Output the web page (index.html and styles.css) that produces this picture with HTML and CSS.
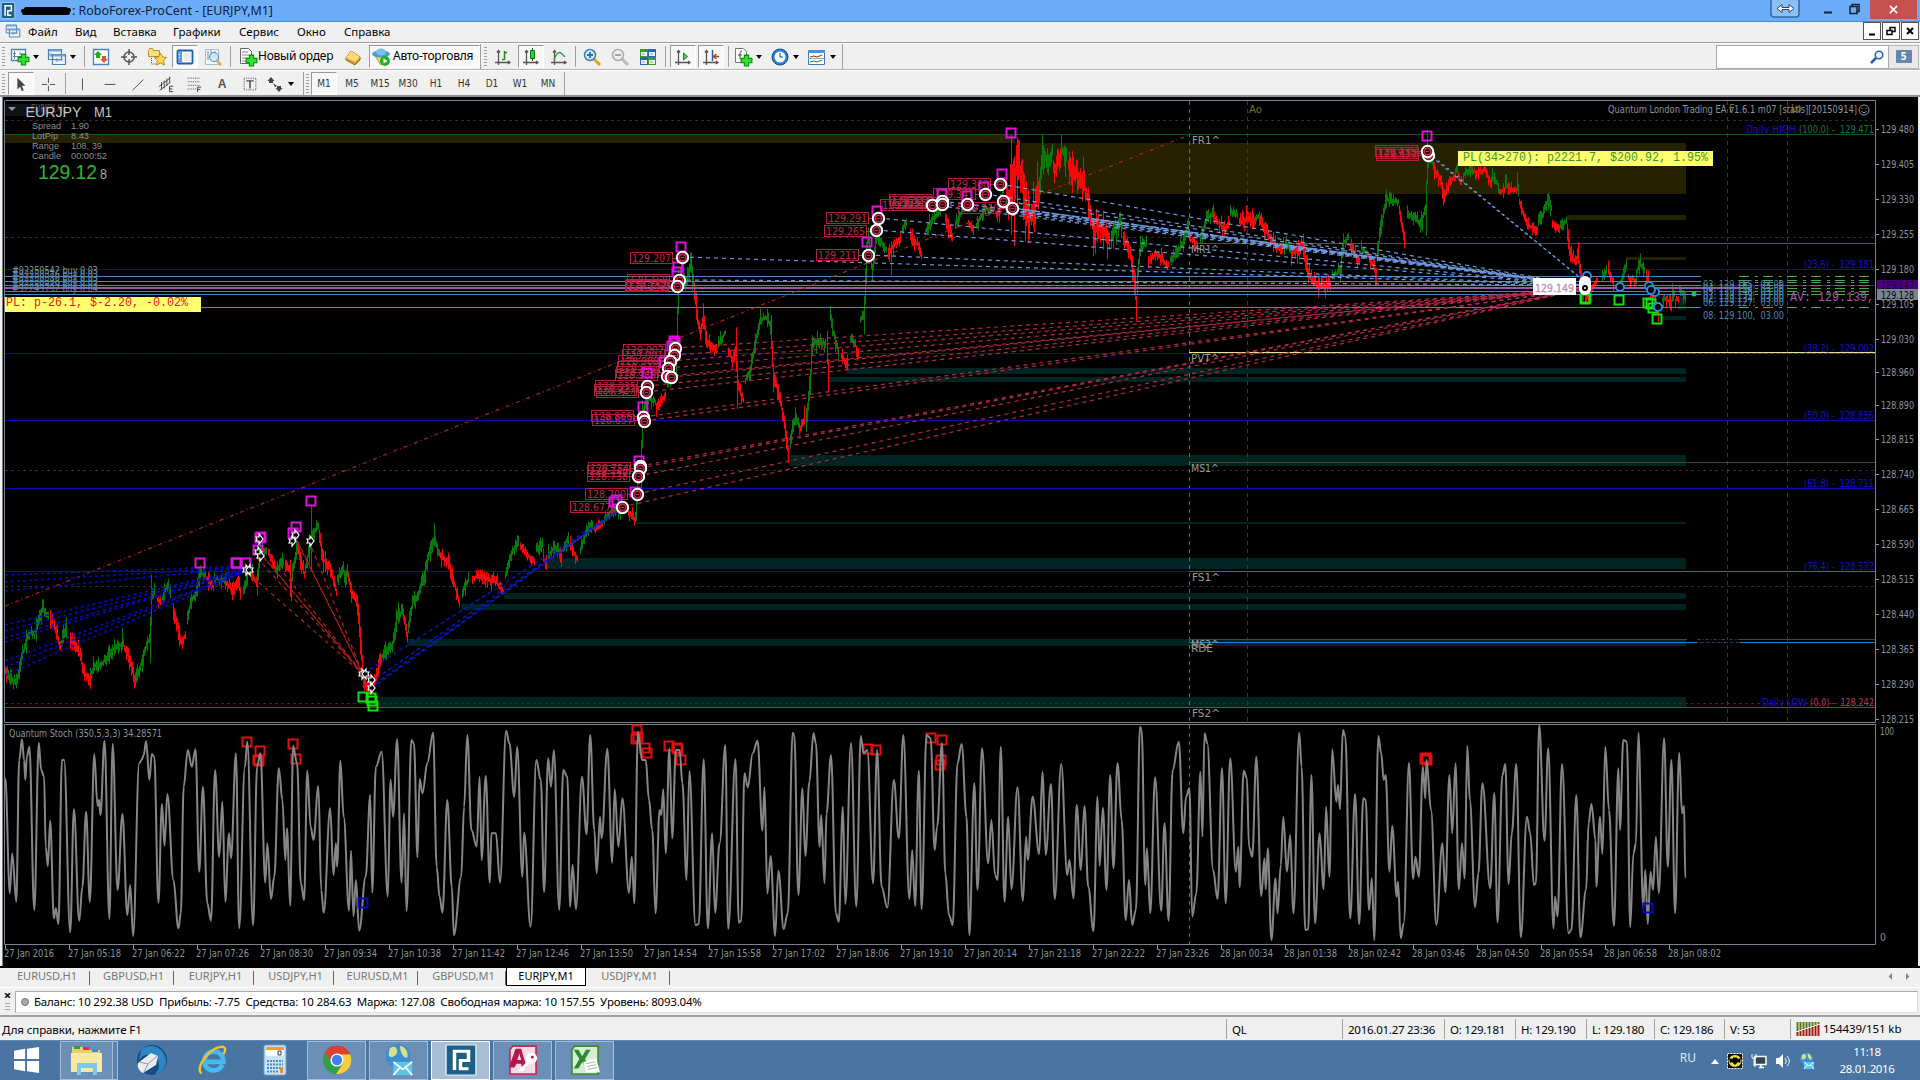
FILE: index.html
```
<!DOCTYPE html>
<html lang="ru">
<head>
  <meta charset="UTF-8">
  <title>RoboForex-ProCent - [EURJPY,M1]</title>
  <link rel="stylesheet" href="styles.css">
</head>
<body>
  <!-- icons -->
  <svg class="defs">
    <symbol id="i-plus" viewBox="0 0 12 12"><path d="M4 1h4v3h3v4H8v3H4V8H1V4h3z" fill="#2fe02f" stroke="#0a8a0a"/></symbol>
    <symbol id="i-newchart" viewBox="0 0 20 20"><path d="M1.500 2.500h14v11h-14z" fill="#fff" stroke="#4f82b4" stroke-width="1.300"/><path d="M4.500 4v8M3 9.500h10M3 6.500h3M10 5v3" stroke="#5f7f9f" fill="none"/><use href="#i-plus" x="7" y="6" width="13" height="13"/></symbol>
    <symbol id="i-profiles" viewBox="0 0 20 20"><path d="M1.500 2.500h13v10h-13zM5.500 7.500h13v10h-13z" fill="#eaf4ff" stroke="#4f82b4" stroke-width="1.200"/><path d="M2 3.500h12M6 8.500h12" stroke="#6aa5e0" stroke-width="2"/><path d="M8 13h8M10 11v4M4 6v4M2 8h3" stroke="#6f8fb0"/></symbol>
    <symbol id="i-market" viewBox="0 0 20 20"><path d="M2.500 2.500h15v15h-15z" fill="#fff" stroke="#4f82c4" stroke-width="1.400"/><path d="M7 4l4 4H9v3H5V8H3z" fill="#18b018"/><path d="M13 16l-4-4h2V9h4v3h2z" fill="#d9583a"/></symbol>
    <symbol id="i-target" viewBox="0 0 20 20"><circle cx="10" cy="10" r="5" fill="none" stroke="#555" stroke-width="1.500"/><path d="M10 2v6M10 12v6M2 10h6M12 10h6" stroke="#555" stroke-width="1.500"/></symbol>
    <symbol id="i-folderstar" viewBox="0 0 20 20"><path d="M1.500 3.500l1-2h3l1 2h6v6h-11z" fill="#f7de80" stroke="#b8922c"/><path d="M4.500 11v6h5" stroke="#555" fill="none" stroke-dasharray="1 1"/><path d="M13.500 6l2 4 4 .5-3 3 1 4.500-4-2-4 2 1-4.500-3-3 4-.5z" fill="#ffd84a" stroke="#b8862c"/></symbol>
    <symbol id="i-nav" viewBox="0 0 20 20"><rect x="2.500" y="3.500" width="15" height="13" rx="1" fill="#fff" stroke="#1d5fa8" stroke-width="1.800"/><path d="M3 4h4v12H3z" fill="#5ea0e6"/><path d="M4 7.500h1M4 10.500h1" stroke="#fff"/><path d="M9 7h7M9 9h7M9 11h7M9 13h7" stroke="#d0dcec"/></symbol>
    <symbol id="i-tester" viewBox="0 0 20 20"><path d="M2.500 2.500h13v15h-13z" fill="#f3f8ff" stroke="#a8bcd0"/><path d="M5 4v9M8 3v8M12 4v7" stroke="#6b8fb8"/><circle cx="11" cy="10" r="4.500" fill="#cfe5ff" fill-opacity=".8" stroke="#5585b8"/><path d="M14 14l4 4" stroke="#e0b030" stroke-width="2.500"/></symbol>
    <symbol id="i-order" viewBox="0 0 20 20"><path d="M2.500 1.500h8l3 3v12h-11z" fill="#fff" stroke="#666"/><path d="M4 5h6M4 8h7M4 11h5M4 14h4" stroke="#888"/><use href="#i-plus" x="7" y="7" width="13" height="13"/></symbol>
    <symbol id="i-gold" viewBox="0 0 20 20"><path d="M3 11l5-7 9 6v3l-5 5-9-5z" fill="#d3962c" stroke="#9a6a12"/><path d="M3 11l5-7 9 6-5 5z" fill="#ffd978"/></symbol>
    <symbol id="i-auto" viewBox="0 0 20 20"><path d="M3 7l7 11 7-11z" fill="#f4d35a" stroke="#c09a30"/><ellipse cx="10" cy="7" rx="9" ry="3.500" fill="#4d9ad4"/><ellipse cx="10" cy="5" rx="5" ry="3.500" fill="#7fc0ea"/><circle cx="14" cy="14" r="5" fill="#22b322"/><path d="M12.500 11.500v5l4-2.500z" fill="#fff"/></symbol>
    <symbol id="i-axes" viewBox="0 0 20 20"><path d="M5.500 3v15M2 15.500h15M4 5.500l1.500-2 1.500 2M15 14l2 1.500-2 1.500" stroke="#555" fill="none" stroke-width="1.300"/></symbol>
    <symbol id="i-bars" viewBox="0 0 20 20"><use href="#i-axes"/><path d="M11.500 4v9M9 12.500h2M12 5.500h2" stroke="#169016" stroke-width="1.500"/></symbol>
    <symbol id="i-candle" viewBox="0 0 20 20"><use href="#i-axes"/><path d="M11.500 1v13" stroke="#0b700b"/><path d="M9.500 3.500h4v8h-4z" fill="#2ed02e" stroke="#0b700b"/></symbol>
    <symbol id="i-line" viewBox="0 0 20 20"><use href="#i-axes"/><path d="M5 13c2-6 5-9 7-7l4 4" fill="none" stroke="#2a9a3a" stroke-width="1.300"/></symbol>
    <symbol id="i-zoomin" viewBox="0 0 20 20"><path d="M12 12l6 6" stroke="#d9a520" stroke-width="3"/><circle cx="8" cy="8" r="5.500" fill="#d8ecff" stroke="#3a7cc0" stroke-width="1.500"/><path d="M5 8h6M8 5v6" stroke="#2a6cb0" stroke-width="1.800"/></symbol>
    <symbol id="i-zoomout" viewBox="0 0 20 20"><path d="M12 12l6 6" stroke="#bbb" stroke-width="3"/><circle cx="8" cy="8" r="5.500" fill="#eee" stroke="#aaa" stroke-width="1.500"/><path d="M5 8h6" stroke="#999" stroke-width="1.800"/></symbol>
    <symbol id="i-tile" viewBox="0 0 20 20"><path d="M2 2h8v8H2zM10 10h8v8h-8z" fill="#3d9a28"/><path d="M10 2h8v8h-8zM2 10h8v8H2z" fill="#2c64b8"/><path d="M3 5h6v4H3zM11 5h6v4h-6zM3 13h6v4H3zM11 13h6v4h-6z" fill="#eef6ee"/><path d="M4 7h3M12 7h3M4 15h3M12 15h3" stroke="#7a9ac0"/></symbol>
    <symbol id="i-scroll" viewBox="0 0 20 20"><use href="#i-axes"/><path d="M10.500 6v7l4-3.500z" fill="#4fd04f" stroke="#148a14"/></symbol>
    <symbol id="i-shift" viewBox="0 0 20 20"><use href="#i-axes"/><path d="M11.500 3v11" stroke="#2060b0" stroke-width="1.500"/><path d="M18 9.500h-5M15.500 7l-3 2.500 3 2.500" stroke="#c23a12" stroke-width="1.500" fill="none"/></symbol>
    <symbol id="i-indic" viewBox="0 0 20 20"><path d="M2.500 1.500h8l3 3v11h-11z" fill="#fff" stroke="#777"/><path d="M9 4c-2 0-2 2-2 4v4M5 8h4" stroke="#444" fill="none"/><use href="#i-plus" x="7" y="7" width="13" height="13"/></symbol>
    <symbol id="i-clock" viewBox="0 0 20 20"><circle cx="10" cy="10" r="8" fill="#2f7fd4" stroke="#0d4a90"/><circle cx="10" cy="10" r="5.500" fill="#f2f8ff"/><path d="M10 6v4h3" stroke="#345" fill="none"/></symbol>
    <symbol id="i-templ" viewBox="0 0 20 20"><path d="M1.500 3.500h16v14h-16z" fill="#fff" stroke="#3c78b8"/><path d="M1 4.500h17" stroke="#4a90e0" stroke-width="3"/><path d="M3 10l4-1 3 1 5-2" stroke="#8a2a20" fill="none"/><path d="M3 15l4-1 3 1 5-2" stroke="#1f8a2a" fill="none"/><path d="M1 11.500h16" stroke="#8ab"/></symbol>
    <symbol id="i-cursor" viewBox="0 0 20 20"><path d="M6 3v13l3-3 2 5 2-1-2-5h4z" fill="#444"/></symbol>
    <symbol id="i-cross" viewBox="0 0 20 20"><path d="M10.500 3v6M10.500 12v6M3 10.500h6M12 10.500h6" stroke="#444"/></symbol>
    <symbol id="i-vline" viewBox="0 0 20 20"><path d="M10.500 4v13" stroke="#444"/></symbol>
    <symbol id="i-hline" viewBox="0 0 20 20"><path d="M4 10.500h12" stroke="#444"/></symbol>
    <symbol id="i-trend" viewBox="0 0 20 20"><path d="M4 17L16 5" stroke="#444"/></symbol>
    <symbol id="i-chan" viewBox="0 0 20 20"><path d="M2 13L15 3M3 17L15 8M5 8v8M8 6v9M11 4v8M14 2v7" stroke="#444"/><path d="M18 12.500h-4v6h4M14 15.500h3" stroke="#333" fill="none"/></symbol>
    <symbol id="i-fib" viewBox="0 0 20 20"><path d="M3 3.500h14M3 7.500h14M3 11.500h14M3 15.500h9" stroke="#444" stroke-dasharray="1 1"/><path d="M18 13.500h-4V19M14 16h3" stroke="#333" fill="none"/></symbol>
    <symbol id="i-label" viewBox="0 0 20 20"><path d="M3.500 3.500h13v13h-13z" fill="none" stroke="#444" stroke-dasharray="1 1"/><path d="M6 6.500h8M10 6v9" stroke="#444" stroke-width="1.600"/></symbol>
    <symbol id="i-arrows" viewBox="0 0 20 20"><path d="M6 3l3.500 4H8v2H4V7H2.500zM8 9l4 3-2 1zM14 18l-3.500-4H12v-2h4v2h1.500z" fill="#444"/></symbol>
    <symbol id="i-robo" viewBox="0 0 32 38"><rect x="1" y="1" width="30" height="36" rx="1" fill="#1d5f86" stroke="#d9ebf5" stroke-width="1.500"/><path d="M9.500 31V8.500h14v11h-8v10h8" fill="none" stroke="#fff" stroke-width="3.500"/></symbol>
    <symbol id="i-globe" viewBox="0 0 30 36"><circle cx="14" cy="14" r="13" fill="#3c8fd0"/><path d="M5 6c5-5 9 0 8 4s-7 7-9 3zM16 3c6 1 9 7 8 12-4 2-8-5-8-12z" fill="#d8e08a"/><path d="M9 20h20v14H9z" fill="#5cc6e8"/><path d="M9 20l10 8 10-8M9 34l7-8M29 34l-7-8" stroke="#fff" stroke-width="1.800" fill="none"/></symbol>
  </svg>

  <div class="titlebar">
    <svg class="app-icon" preserveAspectRatio="none"><use href="#i-robo"/></svg>
    <svg class="scribble" viewBox="0 0 52 10"><path d="M3 5l46-1M4 7h44M6 3h40" stroke="#000" stroke-width="4" stroke-linecap="round"/></svg>
    <span>: RoboForex-ProCent - [EURJPY,M1]</span>
    <div class="win-buttons">
      <svg class="sizer" viewBox="0 0 30 18"><path d="M1 0v14q0 3 3 3h22q3 0 3-3V0" fill="#8cc0fa" stroke="#33699f" stroke-width="1.500"/><path d="M7 8.500l5-4v3h7v-3l5 4-5 4v-3h-7v3z" fill="#fff" stroke="#345"/></svg>
      <svg class="minmax" viewBox="0 0 60 19"><path d="M20 12.500h8" stroke="#123" stroke-width="2"/><path d="M46 6.500h7v7h-7zM48 6V4.500h7v7h-2" fill="none" stroke="#123" stroke-width="1.500"/></svg>
      <div class="close"><svg viewBox="0 0 10 10" width="9" height="9"><path d="M1 1l8 8M9 1l-8 8" stroke="#fff" stroke-width="1.800"/></svg></div>
    </div>
  </div>

  <div class="menubar">
    <svg class="menu-icon"><use href="#i-profiles"/></svg>
    <span class="m1">Файл</span><span class="m2">Вид</span><span class="m3">Вставка</span><span class="m4">Графики</span><span class="m5">Сервис</span><span class="m6">Окно</span><span class="m7">Справка</span>
    <div class="mdi">
      <div><svg viewBox="0 0 12 12"><path d="M3 9.500h6" stroke="#000" stroke-width="2"/></svg></div>
      <div><svg viewBox="0 0 12 12"><path d="M2 5.500h5v4H2zM5 5V2.500h5v4H7" fill="none" stroke="#000" stroke-width="1.500"/></svg></div>
      <div><svg viewBox="0 0 12 12"><path d="M3 3l6 6M9 3l-6 6" stroke="#000" stroke-width="2"/></svg></div>
    </div>
  </div>

  <div class="toolrow first">
    <div class="grip"></div>
    <div class="dd"><svg><use href="#i-newchart"/></svg><i></i></div>
    <div class="dd"><svg><use href="#i-profiles"/></svg><i></i></div>
    <div class="sep s5"></div>
    <div class="tool"><svg><use href="#i-market"/></svg></div>
    <div class="tool"><svg><use href="#i-target"/></svg></div>
    <div class="tool"><svg><use href="#i-folderstar"/></svg></div>
    <div class="tool on"><svg><use href="#i-nav"/></svg></div>
    <div class="tool"><svg><use href="#i-tester"/></svg></div>
    <div class="sep s6"></div>
    <div class="order"><svg><use href="#i-order"/></svg><span>Новый ордер</span></div>
    <div class="tool"><svg><use href="#i-gold"/></svg></div>
    <div class="auto"><svg><use href="#i-auto"/></svg><span>Авто-торговля</span></div>
    <div class="edge"></div>
    <div class="grip g1"></div>
    <div class="tool"><svg><use href="#i-bars"/></svg></div>
    <div class="tool on"><svg><use href="#i-candle"/></svg></div>
    <div class="tool"><svg><use href="#i-line"/></svg></div>
    <div class="sep s5"></div>
    <div class="tool"><svg><use href="#i-zoomin"/></svg></div>
    <div class="tool"><svg><use href="#i-zoomout"/></svg></div>
    <div class="tool"><svg><use href="#i-tile"/></svg></div>
    <div class="sep s7"></div>
    <div class="tool on"><svg><use href="#i-scroll"/></svg></div>
    <div class="tool on"><svg><use href="#i-shift"/></svg></div>
    <div class="sep s6"></div>
    <div class="dd"><svg><use href="#i-indic"/></svg><i></i></div>
    <div class="dd"><svg><use href="#i-clock"/></svg><i></i></div>
    <div class="dd"><svg><use href="#i-templ"/></svg><i></i></div>
    <div class="edge"></div>
    <div class="search">
      <div class="field"><svg viewBox="0 0 14 14"><circle cx="9" cy="5" r="3.800" fill="#eaf3ff" stroke="#2a5cb0" stroke-width="1.500"/><path d="M6 8l-5 5" stroke="#2a5cb0" stroke-width="2.500"/></svg></div>
      <div class="chat"><b>5</b></div>
    </div>
  </div>

  <div class="toolrow second">
    <div class="grip"></div>
    <div class="tool on first-tool"><svg><use href="#i-cursor"/></svg></div>
    <div class="tool"><svg><use href="#i-cross"/></svg></div>
    <div class="sep s6"></div>
    <div class="tool"><svg><use href="#i-vline"/></svg></div>
    <div class="tool"><svg><use href="#i-hline"/></svg></div>
    <div class="tool"><svg><use href="#i-trend"/></svg></div>
    <div class="tool"><svg><use href="#i-chan"/></svg></div>
    <div class="tool"><svg><use href="#i-fib"/></svg></div>
    <div class="tool letter">A</div>
    <div class="tool"><svg><use href="#i-label"/></svg></div>
    <div class="dd"><svg><use href="#i-arrows"/></svg><i></i></div>
    <div class="edge"></div>
    <div class="grip g2"></div>
    <div class="tool tf on">M1</div><div class="tool tf">M5</div><div class="tool tf">M15</div><div class="tool tf">M30</div><div class="tool tf">H1</div><div class="tool tf">H4</div><div class="tool tf">D1</div><div class="tool tf">W1</div><div class="tool tf">MN</div>
    <div class="edge"></div>
  </div>

  <div class="chart-window"><svg id="chart" width="1920" height="869" viewBox="0 97 1920 869"></svg></div>

  <div class="tabs">
    <div class="w89">EURUSD,H1</div><div class="w84">GBPUSD,H1</div><div class="w80">EURJPY,H1</div><div class="w80">USDJPY,H1</div><div class="w84">EURUSD,M1</div><div class="w88">GBPUSD,M1</div><div class="w80 active">EURJPY,M1</div><div class="w84">USDJPY,M1</div>
    <svg class="tab-arrows" viewBox="0 0 24 8"><path d="M4 0v8L0 4zM20 0v8l4-4z" fill="#888"/></svg>
  </div>

  <div class="terminal">
    <div class="tside"><b>×</b><i></i></div>
    <div class="balance"><span class="dot"></span><span class="bal-text">Баланс: 10 292.38 USD&nbsp; Прибыль: -7.75&nbsp; Средства: 10 284.63&nbsp; Маржа: 127.08&nbsp; Свободная маржа: 10 157.55&nbsp; Уровень: 8093.04%</span></div>
  </div>

  <div class="status">
    <span class="help">Для справки, нажмите F1</span>
    <div class="f116">QL</div><div class="f102">2016.01.27 23:36</div><div class="f71">O: 129.181</div><div class="f71">H: 129.190</div><div class="f68">L: 129.180</div><div class="f70">C: 129.186</div><div class="f66">V: 53</div>
    <div class="net"><svg viewBox="0 0 24 14" width="24" height="14"><path d="M1.500 0v9M4.500 0v8M7.500 0v7M10.500 0v6M13.500 0v5M16.500 0v4M19.500 0v3M22.500 0v2" stroke="#5a7a18" stroke-width="2"/><path d="M1.500 14v-4M4.500 14v-5M7.500 14v-6M10.500 14v-7M13.500 14v-8M16.500 14v-9M19.500 14v-10M22.500 14v-11" stroke="#a01c10" stroke-width="2"/></svg><span>154439/151 kb</span></div>
  </div>

  <div class="taskbar">
    <div class="start"><svg viewBox="0 0 28 28" width="28" height="26"><path d="M0 4l12-2v11H0zM14 2l13-2v13H14zM0 15h12v11L0 24zM14 15h13v13l-13-2z" fill="#fff"/></svg></div>
    <div class="task open stack"><svg viewBox="0 0 34 32" width="34" height="32"><path d="M2 3h12l2 3h14v22H2z" fill="#e8cf74"/><path d="M4 2h6v3H4z" fill="#2f9e3a"/><path d="M13 3h6v3h-6z" fill="#d33"/><path d="M22 5h6v3h-6z" fill="#3a8fd4"/><path d="M1 9h31v19H1z" fill="#fae9a2"/><path d="M7 31V19h20v12h-4v-7H11v7z" fill="#7cc8ee"/></svg></div>
    <div class="task"><svg viewBox="0 0 32 32" width="32" height="32"><circle cx="17" cy="16" r="15" fill="#174a86"/><path d="M6 6C14-2 30 2 31 17c0 8-6 13-11 13 6-6 5-15-2-18S6 12 4 17z" fill="#3086c4"/><path d="M3 19l13-10 7 3-2 9-13 8c-4-2-6-6-5-10z" fill="#e9edf0"/><path d="M4 18l9 2 9-8M13 20l-4 8" fill="none" stroke="#8a98a8"/></svg></div>
    <div class="task"><svg viewBox="0 0 34 32" width="32" height="32"><path d="M27 21c-2 4-5 6-9 6-6 0-10-4-10-10S12 7 18 7s10 4 10 11H10" fill="none" stroke="#43baf0" stroke-width="5"/><path d="M5 30C-3 26 12 4 25 2c7-1 5 5 3 8" fill="none" stroke="#f2c22c" stroke-width="2.500"/></svg></div>
    <div class="task"><svg viewBox="0 0 24 32" width="24" height="32"><rect x="1" y="1" width="22" height="30" rx="2" fill="#c9e4f6" stroke="#6ba4cc"/><path d="M3 3h18v3H3z" fill="#f09a3c"/><path d="M3 6h18v6H3z" fill="#f5fbff"/><path d="M15 7h3v4h-3z" fill="none" stroke="#345"/><path d="M4 17h16M4 20.500h16M4 24h16M4 27.500h12" stroke="#4f8fc0" stroke-width="2" stroke-dasharray="2 1"/><path d="M17 24h3v5h-3z" fill="#f08a2c"/></svg></div>
    <div class="task open"><svg viewBox="0 0 32 32" width="30" height="32"><circle cx="16" cy="16" r="15" fill="#2f9f49"/><path d="M3 8A15 15 0 0 1 30 10H16L10 18z" fill="#dc4233"/><path d="M30 10A15 15 0 0 1 15 31l8-12-4-9z" fill="#fbcf3c"/><circle cx="16" cy="16" r="7" fill="#fff"/><circle cx="16" cy="16" r="5.500" fill="#3f7df0"/></svg></div>
    <div class="task open"><svg width="30" height="34"><use href="#i-globe"/></svg></div>
    <div class="task open current"><svg viewBox="0 0 32 38" preserveAspectRatio="none" width="32" height="32"><use href="#i-robo" width="32" height="38"/></svg></div>
    <div class="task open"><svg viewBox="0 0 32 32" width="30" height="30"><path d="M5 1h25v30H2V5z" fill="#f6dbe6" stroke="#c03060" stroke-width="2"/><path d="M1 24L8 4h6l6 20h-5l-1-4H9l-2 4zM10 16h4l-2-7z" fill="#b5174c"/><circle cx="25" cy="14" r="6" fill="#fff"/><circle cx="26" cy="13" r="1.500" fill="#b5174c"/><path d="M21 17l-11 11h6l8-9" fill="#fff"/></svg></div>
    <div class="task open"><svg viewBox="0 0 32 32" width="30" height="30"><path d="M5 1h25v30H2V5z" fill="#d8ecd4" stroke="#3f8f3c" stroke-width="2"/><path d="M4 5h5l4 7 4-7h5l-6 10 6 10h-5l-4-7-4 7H4l6-10z" fill="#2c8a34"/><path d="M14 18l14-4 4 15H17z" fill="#fff"/><path d="M17 20l10-2M18 23l10-2M19 26l10-2" stroke="#8cbf86"/></svg></div>
    <div class="tray">
      <span class="lang">RU</span>
      <svg viewBox="0 0 8 5" width="8" height="5"><path d="M0 5l4-5 4 5z" fill="#fff"/></svg>
      <svg viewBox="0 0 16 16" width="16" height="16"><path d="M.5.5h15v15H.5z" fill="#111" stroke="#fff" stroke-dasharray="2 1"/><ellipse cx="8" cy="8" rx="6.500" ry="6" fill="#f0e040"/><path d="M2 5l3 1 2-2 1 1 1-1 2 2 3-1-1 5-2-1-3 3-3-3-2 1z" fill="#000"/></svg>
      <svg viewBox="0 0 16 16" width="16" height="16"><path d="M4 3.500h11v8H4zM8 14.500h5M10 12v2" fill="#345" stroke="#fff" stroke-width="1.500"/><path d="M1 1v4h4V1M3 5v8h2" fill="none" stroke="#fff"/></svg>
      <svg viewBox="0 0 16 16" width="16" height="16"><path d="M1 5h3l4-4v14l-4-4H1z" fill="#fff"/><path d="M10 5c1.500 2 1.500 4 0 6M12 3c3 3 3 7 0 10" stroke="#fff" fill="none"/></svg>
      <svg width="16" height="18"><use href="#i-globe"/></svg>
    </div>
    <div class="clock"><span>11:18</span><span>28.01.2016</span></div>
  </div>

  <script src="chart.js"></script>
</body>
</html>
```
FILE: styles.css
```
* { box-sizing: border-box; margin: 0; padding: 0; }
body { width: 1920px; height: 1080px; overflow: hidden; display: flex; flex-direction: column; background: #f0f0f0; font-family: "Noto Sans", sans-serif; font-size: 12px; color: #000; white-space: nowrap; }
svg { display: block; flex: none; }
.defs { position: absolute; width: 0; height: 0; }

.titlebar { height: 22px; background: #6badf8; border-bottom: 1px solid #4a88cc; display: flex; align-items: center; color: #10203a; }
.app-icon { width: 16px; height: 17px; }
.scribble { width: 52px; height: 10px; margin-left: 4px; }
.titlebar span { font-size: 12.5px; width: 203px; letter-spacing: -.05px; }
.win-buttons { margin-left: auto; display: flex; align-items: flex-start; height: 22px; padding-right: 3px; }
.sizer { width: 30px; height: 18px; }
.minmax { width: 60px; height: 19px; margin: 0 6px 0 4px; }
.close { width: 47px; height: 19px; background: #c75050; display: flex; align-items: center; justify-content: center; }

.menubar { height: 21px; border-bottom: 1px solid #a0a0a0; display: flex; align-items: center; padding-bottom: 2px; }
.menu-icon { width: 16px; height: 16px; margin: 0 7px 0 5px; }
.menubar span { font-size: 11.500px; }
.m1 { width: 47px; } .m2 { width: 38px; } .m3 { width: 60px; } .m4 { width: 66px; } .m5 { width: 58px; } .m6 { width: 47px; }
.mdi { margin-left: auto; display: flex; gap: 1px; padding-right: 1px; }
.mdi div { width: 18px; height: 18px; border: 1px solid #555; background: #fdfdfd; padding: 2px; }
.mdi svg { width: 12px; height: 12px; }

.toolrow { display: flex; align-items: center; }
.toolrow svg { width: 20px; height: 20px; }
.first { height: 27px; border-top: 1px solid #fff; border-bottom: 1px solid #b4b4b4; }
.second { height: 27px; border-top: 1px solid #fff; border-bottom: 2px solid #909090; padding-top: 1px; }
.grip { width: 3px; height: 20px; margin: 0 2px 0 2px; background: repeating-linear-gradient(#a0a0a0 0 1px, #f0f0f0 1px 3px); flex: none; }
.first .grip:first-child, .second .grip:first-child { margin-right: 3px; }
.first .g1 { margin: 0 2px 0 3px; }
.tool { width: 28px; height: 23px; display: flex; align-items: center; justify-content: center; flex: none; }
.tool.on { width: 26px; margin: 0 1px; background: #f8f8f8; border: 1px solid #fff; border-top-color: #999; border-left-color: #999; }
.tool.tf { font-size: 10px; color: #333; font-family: "DejaVu Sans Condensed", "DejaVu Sans", sans-serif; }
.tool.first-tool { margin: 0; }
.second .tool svg { width: 18px; height: 18px; }
.letter { font: bold 12px "Liberation Sans", sans-serif; color: #555; }
.dd { width: 37px; height: 23px; display: flex; align-items: center; gap: 3px; padding-left: 2px; flex: none; }
.dd i { border: 3px solid transparent; border-top: 4px solid #000; border-bottom: 0; }
.sep { height: 21px; background: linear-gradient(#a0a0a0, #a0a0a0) center / 1px 100% no-repeat; flex: none; }
.s5 { width: 5px; } .s6 { width: 6px; } .s7 { width: 7px; }
.order { width: 106px; display: flex; align-items: center; padding-left: 5px; gap: 0; }
.order span, .auto span { font-size: 12px; letter-spacing: -.25px; margin-top: -2px; }
.auto { width: 111px; height: 23px; margin-left: 2px; display: flex; align-items: center; gap: 2px; padding-left: 1px; background: #f8f8f8; border: 1px solid #fff; border-top-color: #999; border-left-color: #999; }
.edge { width: 1px; align-self: stretch; background: #a0a0a0; flex: none; }
.second .edge { margin-left: 2px; }
.g2 { margin-right: 1px; }
.second .dd { padding-left: 1px; width: 37px; }
.search { margin-left: auto; display: flex; height: 24px; padding-right: 1px; }
.field { width: 173px; border: 1px solid #aaa; background: #fff; display: flex; justify-content: flex-end; align-items: center; padding-right: 4px; }
.search .field svg { width: 14px; height: 14px; }
.chat { width: 30px; border: 1px solid #b8b8b8; border-left: 0; background: #e8e8e8; display: flex; align-items: center; justify-content: center; }
.chat b { width: 16px; height: 13px; background: #6486b0; color: #fff; font-size: 10px; line-height: 13px; text-align: center; border-radius: 1px; }

.chart-window { height: 869px; flex: none; background: #000; }
#chart text { white-space: pre; }
.t { font-family: "DejaVu Sans Condensed", "DejaVu Sans", sans-serif; font-size: 10.500px; }
.a { font-family: "Liberation Sans", Arial, sans-serif; }
.m { font-family: "Liberation Mono", monospace; font-size: 12px; }

.tabs { height: 22px; border-top: 2px solid #000; display: flex; align-items: stretch; padding-left: 1px; color: #777; border-bottom: 1px solid #fff; }
.tabs div { text-align: center; line-height: 16px; height: 18px; font-size: 11px; padding-left: 3px; background: linear-gradient(#666, #666) right 3px / 1px 14px no-repeat; }
.tabs .active { background: #fff; color: #000; border: 1px solid #000; border-top: 0; padding-left: 0; }
.w80 { width: 80px; } .w84 { width: 84px; } .w88 { width: 88px; } .w89 { width: 89px; }
.tab-arrows { width: 24px; height: 7px; margin: 5px 9px 0 auto; }

.terminal { height: 29px; display: flex; padding-top: 3px; border-bottom: 2px solid #a0a0a0; }
.tside { width: 15px; display: flex; flex-direction: column; align-items: center; }
.tside b { font-size: 13px; line-height: 9px; }
.tside i { width: 5px; height: 8px; margin-top: 3px; background: repeating-linear-gradient(#aaa 0 1px, #f0f0f0 1px 3px); }
.balance { flex: 1; height: 22px; margin-right: 2px; border: 1px solid #aaa; border-right-color: #ddd; border-bottom-color: #ddd; background: #fff; display: flex; align-items: center; padding: 0 0 1px 5px; }
.dot { width: 8px; height: 8px; border-radius: 4px; background: #aaa; border: 1px solid #777; margin-right: 5px; }
.bal-text { font-size: 11.500px; letter-spacing: -.2px; }

.status { height: 23px; display: flex; align-items: center; font-size: 11.500px; }
.help { padding: 2px 0 0 2px; flex: 1; letter-spacing: -.1px; }
.status div { height: 20px; line-height: 21px; padding-left: 5px; border-left: 1px solid #a0a0a0; letter-spacing: -.25px; }
.f116 { width: 116px; } .f102 { width: 102px; } .f71 { width: 71px; } .f68 { width: 68px; } .f70 { width: 70px; } .f66 { width: 66px; }
.status .net { width: 130px; display: flex; align-items: center; gap: 3px; letter-spacing: -.1px; }

.taskbar { height: 40px; flex: none; background: #4a75a3; border-top: 1px solid #5f88b3; display: flex; align-items: center; padding-bottom: 1px; }
.start { width: 60px; padding-left: 13px; }
.task { width: 59px; height: 39px; margin-right: 3px; display: flex; align-items: center; justify-content: center; flex: none; }
.task.open { background: #6b8fb7; border: 1px solid #a5bdd6; }
.task.current { background: #a9bdd5; border-color: #fff; }
.task.stack { width: 58px; margin-right: 3px; box-shadow: inset -4px 0 #5a82ad, inset -5px 0 #a5bdd6; padding-right: 5px; }
.tray { margin-left: auto; display: flex; align-items: center; gap: 8px; color: #fff; padding: 2px 7px 0 0; }
.lang { font-size: 12px; margin: -8px 7px 0 0; color: #dfe9f3; }
.clock { width: 98px; display: flex; flex-direction: column; align-items: center; color: #fff; font-size: 11.500px; line-height: 17px; padding-right: 8px; letter-spacing: -.4px; }
```
FILE: chart.js
```
const chart = document.getElementById('chart');
let out = '';

const add = s => { out += s; };
const hline = (y, x1, x2, c, extra = '') => add(`<path d="M${x1} ${y}H${x2}" stroke="${c}" ${extra}/>`);
const vline = (x, y1, y2, c, extra = '') => add(`<path d="M${x} ${y1}V${y2}" stroke="${c}" ${extra}/>`);
const line = (x1, y1, x2, y2, c, dash = '3 3', w = 1.2) => add(`<path d="M${x1} ${y1}L${x2} ${y2}" stroke="${c}" stroke-width="${w}" stroke-dasharray="${dash}"/>`);
const rect = (x, y, w, h, fill, extra = '') => add(`<rect x="${x}" y="${y}" width="${w}" height="${h}" fill="${fill}" ${extra}/>`);
const square = (x, y, c, s = 9) => rect(x - s / 2, y - s / 2, s, s, 'none', `stroke="${c}" stroke-width="2"`);
const text = (x, y, s, c, cls = 't', w = 0, extra = '') =>
  add(`<text x="${x}" y="${y}" class="${cls}" fill="${c}" ${w ? `textLength="${w}" lengthAdjust="spacingAndGlyphs"` : ''} ${extra}>${s}</text>`);

let seed = 7;
function rnd() { seed = (seed * 16807) % 2147483647; return seed / 2147483647; }

// window edges
rect(0, 97, 2, 869, '#f0f0f0');
rect(2, 97, 1, 869, '#808080');
rect(1918, 97, 2, 869, '#f0f0f0');

// supply / demand zones
rect(5, 135, 1010, 8, '#262200');
rect(1021, 143, 665, 51, '#262200');
rect(1567, 215, 119, 5, '#262200');
rect(1626, 257, 60, 3, '#262200');
[[847, 368, 6], [828, 377, 5], [789, 455, 11], [636, 522, 2], [545, 558, 11], [504, 593, 6], [461, 604, 6],
 [408, 639, 7], [379, 697, 10], [1662, 316, 4]].forEach(z => rect(z[0], z[1], 1686 - z[0], z[2], '#002422'));
rect(1678, 297, 8, 13, '#002422');

// grid
[120.5, 237.5, 353.5, 470.5, 586.5, 703.5].forEach(y => hline(y, 5, 1875, '#2b302b', 'stroke-dasharray="3 3"'));
vline(1189.5, 101, 944, '#666', 'stroke-dasharray="4 4"');
[1247.5, 1727.5, 1787.5].forEach(x => vline(x, 101, 722, '#3d3d18', 'stroke-dasharray="4 4"'));

// levels
hline(134.5, 5, 1875, '#0d5a12');
[269.5, 420.5, 488.5, 571.5].forEach(y => hline(y, 5, 1875, '#0a0ab0'));
hline(353.5, 5, 1189, '#0a0aa8');
hline(353.5, 5, 1189, '#10105a', 'stroke-dasharray="3 3"');
hline(571.5, 1189, 1875, '#5a5aa0');
hline(707.5, 5, 1875, '#a03038');
hline(243.5, 1197, 1875, '#55551c');
hline(462.5, 1189, 1875, '#4a4a18');
hline(639.5, 1189, 1875, '#4a4a20');
hline(642.5, 1189, 1875, '#2080c8');
rect(1687, 639, 10, 1, '#000');
rect(1697, 639, 43, 5, '#000');
hline(639.5, 1697, 1740, '#3a3a18', 'stroke-dasharray="4 2 1 1"');
hline(642.5, 1697, 1740, '#17568a', 'stroke-dasharray="1 2 2 1"');
hline(352.500, 1189, 1875, '#e8df96');
hline(353.5, 1189, 1875, '#4a4610', 'stroke-dasharray="3 3"');

const candles = [
  ['r', '5,670 6,676'], ['g', '7,672 10,680 16,684 22,655 28,635 35,632 42,608 48,617'], ['r', '50,620 56,632 60,648'],
  ['g', '60,645 66,627'], ['r', '70,637 78,650 84,673 90,680'], ['g', '90,678 94,665 100,666 108,655 114,648 122,645 123,642'],
  ['r', '124,648 128,655 135,682'], ['g', '135,680 142,660 147,642 150,640 151,598 154,590'], ['r', '157,600 160,603'],
  ['g', '162,597 167,585 170,592'], ['r', '173,610 178,630 181,642 185,635'], ['g', '187,620 191,600 196,592 200,572 204,576'],
  ['r', '205,577 213,587'], ['g', '213,578 225,580'], ['r', '225,582 232,590 238,578 240,594'], ['g', '243,590 249,568 252,572'],
  ['r', '252,575 257,585'], ['g', '257,580 260,552 266,550'], ['r', '268,553 275,568'], ['g', '276,570 283,562'],
  ['r', '285,568 290,572 291,588'], ['g', '292,572 297,546'], ['r', '298,548 304,575'], ['g', '305,568 310,544 316,528 318,525'],
  ['r', '319,535 323,560 329,565 336,592'], ['g', '337,580 342,568 346,578'],
  ['r', '347,572 351,590 357,605 360,640 363,680 368,688 375,680 380,662'],
  ['g', '381,658 386,650 392,645 396,622 398,612 403,614'], ['r', '404,620 407,638'],
  ['g', '408,625 413,600 418,595 424,575 430,548 434,538 438,552'], ['r', '439,555 448,562 453,580 459,603'],
  ['g', '462,592 468,580'], ['r', '472,578 480,575 490,580 496,582 503,592'], ['g', '505,575 511,555 518,540'],
  ['r', '520,545 527,555 534,562'], ['g', '536,550 542,545'], ['r', '543,560 546,562'], ['g', '548,555 555,548 558,550'],
  ['r', '559,552 561,556'], ['g', '563,548 568,542'], ['r', '570,545 577,560'], ['g', '580,550 586,532 592,523'],
  ['r', '594,530 602,525'], ['g', '604,518 612,510 620,512'], ['r', '628,512 635,520'],
  ['g', '636,505 637,485 641,470 642,425 645,400 648,398 655,402'], ['r', '656,408 660,402 665,395'],
  ['g', '667,385 672,375 676,358 677,330 678,290 682,264 685,285 691,262 692,278'], ['r', '693,280 697,318 700,335 703,315 706,340 716,350'],
  ['g', '718,345 725,332'], ['r', '728,350 732,360 736,348 737,385 743,400'], ['g', '745,380 750,372 755,342 760,320 765,317 770,324'],
  ['r', '771,335 773,375 780,400 785,430 788,454'], ['g', '790,440 795,417 799,425'], ['r', '800,430 804,418'],
  ['g', '806,425 810,380 812,345 820,340 825,345'], ['r', '827,350 828,375'], ['g', '830,312 832,330 838,350'],
  ['r', '841,355 847,365'], ['g', '850,338 855,345'], ['r', '856,350 858,356'], ['g', '860,320 864,312 866,260 868,235 872,272 876,234 880,242 886,250'],
  ['r', '888,255 893,245 900,240'], ['g', '902,228 906,222'], ['r', '910,235 914,245 917,242 921,256'], ['g', '925,232 931,220 940,210'],
  ['r', '945,218 952,238'], ['g', '955,225 962,210'], ['r', '968,222 973,230'], ['g', '976,225 985,208 993,210'],
  ['r', '996,215 999,212'], ['g', '1000,200 1003,190'], ['r', '1006,192 1010,195 1012,185 1017,165 1022,175 1025,220 1028,218 1035,205 1039,185', 18],
  ['g', '1040,180 1042,150 1048,165 1052,152', 10], ['r', '1053,170 1060,160', 10], ['g', '1061,148 1066,158', 10],
  ['r', '1068,165 1075,175 1082,180 1088,200 1093,230 1100,225 1109,240', 13],
  ['g', '1111,240 1118,222 1122,225', 9], ['r', '1123,235 1130,252 1135,290 1136,305', 8], ['g', '1137,280 1140,245 1146,245'],
  ['r', '1148,262 1155,254 1160,258 1168,266'], ['g', '1170,260 1177,252 1183,242 1188,225'], ['r', '1190,240 1197,243'],
  ['g', '1200,240 1206,218 1213,214'], ['r', '1214,218 1225,230 1229,222'], ['g', '1230,212 1237,215'],
  ['r', '1239,222 1248,218 1254,222', 7], ['g', '1255,218 1258,216'], ['r', '1259,220 1270,238 1275,245 1282,252'], ['g', '1283,245 1290,248'],
  ['r', '1291,252 1298,250 1303,245 1308,275 1318,285 1330,286', 8], ['g', '1332,275 1340,272 1343,242 1348,238'], ['r', '1350,245 1359,262'],
  ['g', '1361,248 1367,255'], ['r', '1368,255 1374,268 1376,280'], ['g', '1377,255 1380,230 1386,198 1390,202 1398,202'],
  ['r', '1399,210 1404,238'], ['g', '1407,215 1413,217 1420,225 1426,205 1427,160 1432,162'], ['r', '1433,168 1440,180 1444,198 1449,182 1454,178'],
  ['g', '1455,172 1457,168'], ['r', '1458,178 1461,182'], ['g', '1463,175 1472,168'], ['r', '1473,172 1485,170 1491,185'],
  ['g', '1492,177 1498,185'], ['r', '1499,192 1504,190'], ['g', '1505,184 1507,187'], ['r', '1508,190 1517,190'],
  ['g', '1517,180 1518,190'], ['r', '1519,202 1527,225 1537,230'], ['g', '1538,220 1542,215 1548,200 1551,208'], ['r', '1552,222 1559,230'],
  ['g', '1560,225 1566,222'], ['r', '1567,232 1569,250 1573,260 1578,257 1580,275 1583,292 1586,296 1597,280'],
  ['g', '1602,278 1606,270'], ['r', '1608,272 1613,282'], ['g', '1620,284 1626,264'], ['r', '1628,278 1635,280'],
  ['g', '1636,272 1640,264 1644,270'], ['r', '1646,275 1650,293 1655,300 1658,316'], ['g', '1662,300 1664,298'],
  ['r', '1665,300 1671,302'], ['g', '1672,292 1674,295'], ['r', '1675,300 1678,298'], ['g', '1679,290 1685,298']
];
const bars = { g: '', r: '' };
candles.forEach(([c, pts, amp = 5.5]) => {
  const p = pts.split(' ').map(s => s.split(',').map(Number));
  for (let i = 0; i < p.length - 1; i++) {
    const [x1, y1] = p[i], [x2, y2] = p[i + 1];
    const step = Math.abs(y2 - y1) / (x2 - x1) / 2;
    for (let x = x1; x <= x2; x++) {
      const y = y1 + (y2 - y1) * (x - x1) / (x2 - x1);
      const up = amp * (.2 + rnd() * rnd() * 2) + step, dn = amp * (.2 + rnd() * rnd() * 2) + step;
      bars[c] += `M${x + .5} ${(y - up).toFixed(1)}V${(y + dn).toFixed(1)}`;
    }
  }
});
add(`<path d="${bars.g}M311.500 506V572M122.500 628V645M434.500 523V540M1061.500 135V160M1042.500 135V170M1427.500 140V170" stroke="#087a08"/>`);
add(`<path d="${bars.r}M1011.500 135V235M1017.500 137V210M290.500 560V597M891.500 245V275M1014.500 180V246M1028.500 190V243" stroke="#f50808"/>`);

// open order levels
[276.5, 281.5, 285.5, 291.5, 294.5, 307.5].forEach(y => hline(y, 5, 1701, '#4f86b8'));
hline(288, 5, 1750, '#965aa8', 'stroke-width="2"');
hline(285.5, 1701, 1875, '#5c1c88');
[276.5, 280.5, 282.5, 285.5, 288.5, 291.5, 294.5, 307.5].forEach(y => hline(y, 1739, 1875, '#4aa84a', 'stroke-dasharray="10 6 3 5"'));

// trend line and closed trades
line(5, 606, 1189, 135, '#b02020', '4 3 1 3');
[[575, 566], [582, 567], [591, 568], [625, 569], [631, 570], [638, 571], [642, 571], [661, 572], [667, 572], [675, 573]]
  .forEach(p => line(5, p[0], 243, p[1], '#0808c8', '3 3', 1.6));
[[247, 572], [257, 558], [264, 548], [294, 534], [299, 545], [309, 541]].forEach(p => line(p[0], p[1], 363, 674, '#b82018', '4 4'));
line(260, 553, 363, 674, '#b82018', '10 1');
[[364, 673], [371, 682], [372, 688], [375, 684]].forEach(p => line(p[0], p[1], 622, 508, '#0c18b8', '4 3', 1.4));
line(560, 552, 622, 508, '#1838a8', '6 1', 1.6);

const buys = [[682, 257], [868, 255], [876, 230], [878, 218], [932, 205], [942, 201], [942, 204], [967, 204], [985, 194], [1000, 184], [1003, 201], [1012, 208], [1012, 211], [679, 280]];
buys.forEach(p => line(p[0], p[1], 1580, 285, '#6f98e0', '4 4'));
line(1012, 208, 1580, 285, '#6f98e0', '8 2', 1.6);
line(1427, 153, 1583, 280, '#6f98e0', '3 3');
line(1429, 153, 1585, 282, '#6f98e0', '2 4');
const sells = [[675, 348], [674, 355], [670, 361], [668, 368], [667, 376], [671, 377], [647, 386], [646, 392], [643, 417], [644, 421], [640, 466], [640, 468], [638, 476], [637, 494], [622, 507]];
sells.forEach(p => line(p[0], p[1], 1583, 289, '#b42848', '4 4'));

// price tags
[[630, 252, '129.207'], [627, 274, '129.158'], [625, 280, '129.149'], [626, 279, '129.152'], [623, 344, '129.007'], [622, 349, '129.001'], [618, 355, '128.988'], [617, 361, '128.975'],
 [616, 366, '128.970'], [615, 369, '128.968'], [595, 380, '128.935'], [594, 384, '128.927'], [596, 386, '128.921'], [591, 410, '128.866'], [592, 414, '128.857'],
 [588, 462, '128.754'], [587, 465, '128.748'], [587, 470, '128.738'], [585, 488, '128.700'], [570, 501, '128.677'],
 [826, 212, '129.291'], [824, 225, '129.265'], [816, 249, '129.211'], [880, 199, '129.312'], [889, 194, '129.321'], [890, 196, '129.318'],
 [893, 199, '129.315'], [900, 197, '129.310'], [933, 188, '129.341'], [948, 178, '129.360'], [958, 202, '129.310'],
 [1375, 145, '129.435'], [1376, 149, '129.427'], [1376, 147, '129.430']
].forEach(([x, y, s]) => {
  rect(x + .5, y + .5, 42, 11, 'none', 'stroke="#b0203e"');
  hline(y + 6.5, x + 42, x + 52, '#c8204c');
  text(x + 2, y + 10, s, '#c02848', 't', 39);
});

// signal squares
[[200, 563], [237, 563], [236, 563], [246, 563], [260, 538], [261, 537], [258, 550], [296, 527], [293, 533], [311, 501], [1011, 133], [1002, 174],
 [984, 187], [967, 196], [942, 194], [877, 211], [867, 242], [681, 247], [677, 272], [678, 267], [674, 341], [675, 343], [672, 346], [664, 362], [647, 373], [643, 407],
 [639, 461], [635, 492], [617, 500], [614, 502], [1427, 136]].forEach(p => square(p[0], p[1], '#e010e0'));
[[363, 697], [371, 698], [372, 701], [373, 706], [1585, 299], [1586, 298], [1619, 300], [1648, 303], [1651, 304], [1653, 308], [1657, 319]].forEach(p => square(p[0], p[1], '#10e010'));

// entries
const ring = (x, y) => add(`<circle cx="${x}" cy="${y}" r="5.700" fill="#180008" stroke="#fff" stroke-width="2"/><circle cx="${x}" cy="${y}" r="3.400" fill="none" stroke="#c02848" stroke-width="1.700"/><path d="M${x - 2} ${y}h4" stroke="#c02848"/>`);
sells.concat(buys.slice(0, 12), [[679, 280], [677, 286], [1428, 155], [1427, 151]]).forEach(p => ring(p[0] + .5, p[1] + .5));
[[1587, 276], [1620, 287], [1649, 286], [1655, 292], [1651, 290], [1658, 307]].forEach(p =>
  add(`<circle cx="${p[0]}" cy="${p[1]}" r="4" fill="#000" stroke="#2f86e0" stroke-width="2"/>`));
rect(1533, 278, 43, 17, '#fff');
text(1535, 292, '129.149', '#d88a9c', 't', 39, 'stroke="#b8a0c0" stroke-width=".4"');
rect(1579, 276, 12, 19, '#fff', 'rx="6"');
add('<circle cx="1585" cy="288" r="2" fill="#fff" stroke="#000" stroke-width="2"/>');
add('<circle cx="1694" cy="294" r="2.500" fill="#10d030"/>');

// arrows of closed orders
[[246, 570], [250, 570, 1], [259, 539], [258, 552], [260, 556], [292, 541], [295, 535], [310, 541], [362, 674], [366, 674, 1], [371, 680], [371, 688]].forEach(([x, y, left]) => {
  const d = left ? -1 : 1;
  add(`<path d="M${x - 3 * d} ${y - 2}h${3 * d}v-3l${4 * d} 5l${-4 * d} 5v-3h${-3 * d}l${d} -2z" fill="#000" stroke="#fff" stroke-width="1.200"/>`);
});

// axes and frames
add('<path d="M5 100.500H1875.500V722.500H4.500V100.500M4.500 724.500H1875.500M4.500 724V944.500H1875.500V724" fill="none" stroke="#78848f"/>');
const prices = [[129, '129.480'], [164, '129.405'], [199, '129.330'], [234, '129.255'], [269, '129.180'], [304, '129.105'], [339, '129.030'], [372, '128.960'],
  [405, '128.890'], [439, '128.815'], [474, '128.740'], [509, '128.665'], [544, '128.590'], [579, '128.515'], [614, '128.440'], [649, '128.365'], [684, '128.290'], [719, '128.215']];
prices.forEach(([y, s]) => {
  hline(y + .5, 1876, 1879, '#8a949e');
  text(1881, y + 4, s, '#8a949e', 't', 33);
});
rect(1877, 280, 41, 9, '#4b0082');
text(1881, 289, '129.147', '#1a0828', 't', 33);
rect(1877, 289, 41, 11, '#78848f');
text(1881, 298.500, '129.128', '#000', 't', 33);

[['263.7', '(23.6) -  129.181'], ['347.7', '(38.2) -  129.002'], ['414.7', '(50.0) -  128.856'], ['482.7', '(61.8) -  128.711'], ['565.7', '(76.4) -  128.532']]
  .forEach(([y, s]) => text(1804, +y + 4, s, '#1010d8', 't', 70));
text(1746, 132.500, 'Daily HIGH', '#1010d8', 't', 50);
text(1799, 132.500, '(100.0) -  129.471', '#0e7a50', 't', 75);
text(1762, 705.500, 'Daily LOW', '#1010d8', 't', 45);
text(1810, 705.500, '(0.0) -  128.242', '#c03850', 't', 64);

[[1192, 144, 'FR1^'], [1191, 253, 'MR1^'], [1191, 362, 'PVT^'], [1191, 472, 'MS1^'], [1192, 581, 'FS1^'], [1191, 648, 'MS2^'], [1191, 652, 'RDE'], [1192, 717, 'FS2^']]
  .forEach(([x, y, s]) => text(x, y, s, '#9a9a9a', 't', s.length > 3 ? 28 : 22));
text(1249, 113, 'Ao', '#77741c', 't', 13);
text(1729, 112, 'F', '#77741c');
text(1791, 112, 'Lo', '#77741c');

// header
rect(5, 104, 50, 12, '#111116');
add('<path d="M8 107h8l-4 4z" fill="#8a949e"/>');
text(31, 112, 'EURJPY,M1', '#555', 't', 36);
text(25.500, 117, 'EURJPY', '#c8c8c8', 'a', 56, 'font-size="15"');
text(94, 117, 'M1', '#c8c8c8', 'a', 18, 'font-size="15"');
[['Spread', '1.90', 18], ['LotPip', '8.43', 18], ['Range', '108, 39', 31], ['Candle', '00:00:52', 36]].forEach(([k, v, w], i) => {
  text(32, 129 + i * 10, k, '#8c8c8c', 'a', [29, 26, 27, 29][i], 'font-size="9.500"');
  text(71, 129 + i * 10, v, '#8c8c8c', 'a', w, 'font-size="9.500"');
});
text(38, 179, '129.12', '#32b432', 'a', 59, 'font-size="19.500"');
text(100, 179, '8', '#a8a8a8', 'a', 7, 'font-size="14"');
text(1608, 113, 'Quantum London Trading EA v1.6.1 m07 [statis][20150914]', '#8a949e', 't', 249);
add('<circle cx="1864" cy="110" r="5" fill="none" stroke="#8a949e"/><path d="M1862 108v1M1866 108v1M1861.500 111.500q2.500 2.500 5 0" fill="none" stroke="#8a949e"/>');

// order texts
['#92250542 buy 0.03', '#92250576 buy 0.03', '#92250590 buy 0.03', '#92250598 buy 0.03', '#92250549 buy 0.03', '#92249792 buy 0.04']
  .forEach((s, i) => text(12, 274 + i * 3.6, s, i ? '#5a84a8' : '#8a949e', 't', 86));
['03: 129.165,  03.00', '04: 129.154,  03.00', '05: 129.146,  03.00', '07: 129.139,  03.00', '02: 129.134,  03.00', '06: 129.127,  03.00']
  .forEach((s, i) => text(1703, 288 + i * 3.6, s, '#4a88bc', 't', 81));
text(1703, 319, '08: 129.100,  03.00', '#4a88bc', 't', 81);
text(1790, 300.500, 'AV: 129.139,', '#a858b0', 'm', 84);
rect(5, 297, 196, 15, '#ffff70');
text(6, 306, 'PL: p-26.1, $-2.20, -0.02%', '#e02010', 'm', 182);
rect(1458, 151, 255, 15, '#ffff70');
text(1463, 160.500, 'PL(34&gt;270): p2221.7, $200.92, 1.95%', '#3a9a28', 'm', 245);

// stochastic
text(9, 737, 'Quantum Stoch (350,5,3,3) 34.28571', '#8a949e', 't', 153);
text(1880, 735, '100', '#8a949e', 't', 14);
text(1880, 941, '0', '#8a949e');
const stoch = [
  [0, '13,235 24,580 30,460 40,605 47,180 54,118 59,180 62,240 66,170 72,140 84,630 95,128 101,210 108,230 112,440 117,498 123,362 132,655 137,625 143,672 152,180 157,180 172,697 181,328 194,662 202,560 211,335 220,605 231,162 239,318 243,300 246,345 256,122 268,656 276,132 288,570 300,342 312,645 319,555 326,708 341,190 347,180 352,165 358,124 366,240 372,162 378,170 388,608 397,312 403,438 410,282 425,540 437,685 443,640 450,260 460,150 470,200 479,148 488,515 497,260 508,610 517,662 527,210 537,470 545,305 552,605 561,400 566,475 578,160 586,685 600,200 606,125 620,676 630,200 638,160 650,548 655,430 664,597 672,530 683,205 692,300 699,480 703,385 711,617 718,138 728,190 737,550 745,600 753,212 761,380 768,420 780,258 787,570 793,638 809,325 817,525 823,430 826,500 834,182 842,350 855,632 860,452 866,648 872,540 880,692 896,530 907,285 912,578 921,200 935,155 950,590 957,240 963,350 973,118 984,548 990,340 996,633 1008,120 1014,130 1023,472 1028,237 1035,280 1047,190 1061,98 1070,500 1077,590 1084,638 1096,300 1107,560 1112,705 1130,530 1137,320 1145,105 1155,390 1168,440 1175,230 1180,480 1190,228 1200,548 1204,400 1215,400 1225,548 1240,92 1248,130 1260,290 1267,140 1280,530 1284,398 1300,680 1314,180 1325,240 1333,576 1343,175 1350,260 1357,150 1370,630 1380,210 1390,230 1397,620 1403,495 1411,628 1426,230 1437,403 1446,105 1456,390 1462,520 1470,350 1474,415 1488,146 1500,488 1506,268 1515,440 1525,295 1541,578 1548,470 1554,610 1563,95'],
  [640, '5,180 14,180 22,300 30,390 38,640 48,330 52,345 57,268 63,460 72,145 79,415 88,150 97,150 104,250 114,540 121,213 136,675 144,672 156,178 166,685 177,400 184,638 195,430 209,135 216,687 234,178 242,668 248,662 256,220 264,262 276,160 288,122 300,392 305,262 312,580 320,468 331,708 339,512 352,687 362,640 374,98 378,105 388,585 398,265 405,468 415,245 425,100 431,130 440,440 444,345 452,550 457,340 468,165 480,640 487,665 497,320 503,612 517,130 530,620 541,108 548,160 557,150 571,550 581,150 592,560 606,623 622,240 634,415 645,105 660,597 667,450 674,618 683,212 690,627 702,105 712,115 722,450 728,380 740,130 748,520 757,645 766,675 778,190 788,132 800,350 807,705 819,250 827,570 838,145 853,490 861,360 870,525 876,540 884,140 893,605 902,350 910,568 925,262 938,603 946,410 950,480 962,290 978,462 986,215 994,465 1007,252 1016,597 1032,192 1047,525 1052,480 1062,595 1070,315 1080,510 1089,318 1098,560 1111,693 1121,290 1126,498 1134,323 1143,570 1152,225 1160,505 1170,190 1180,360 1190,660 1198,540 1206,675 1215,630 1225,80 1229,90 1238,555 1242,445 1250,640 1262,232 1277,632 1285,370 1295,662 1305,210 1320,125 1331,400 1338,290 1346,265 1353,650 1363,580 1373,215 1378,410 1383,100 1390,130 1404,510 1415,597 1426,205 1435,610 1446,175 1460,515 1466,440 1469,562 1479,212 1487,235 1492,440 1500,470 1510,170 1522,588 1530,475 1533,568 1538,445 1547,720 1557,535 1562,640'],
  [1280, '2,495 8,350 17,515 25,405 33,640 47,98 53,200 62,690 69,688 77,225 86,670 97,400 107,568 113,320 121,530 128,148 138,305 142,255 147,328 154,90 160,110 172,655 184,282 194,672 204,295 210,300 218,630 225,535 231,720 241,108 248,160 254,240 259,225 268,515 275,378 286,590 289,545 296,715 303,670 316,188 326,537 332,470 340,530 350,200 356,295 359,180 370,330 383,675 398,430 405,577 415,225 422,400 430,190 438,568 446,430 452,535 459,138 465,300 478,622 486,520 496,250 515,565 525,280 533,667 545,225 552,192 560,552 568,400 579,192 590,712 605,350 613,400 622,555 627,550 635,75 648,422 657,145 670,685 674,590 680,650 691,192 707,700 714,690 726,285 736,712 750,570 756,370 763,312 773,420 775,560 784,350 790,462 797,140 806,330 818,678 829,205 833,390 841,120 850,125 858,682 866,460 872,430 878,98 890,625 895,510 901,672 908,515 914,570 921,410 928,580 941,115 950,500 959,180 968,640 978,158 985,340 990,318 993,535']
];
[[247, 742], [260, 751], [259, 761], [258, 760], [293, 744], [296, 759], [637, 730], [638, 737], [636, 739], [645, 748], [647, 753], [669, 746], [677, 748], [681, 760], [678, 749], [868, 749], [876, 750], [931, 738],
 [942, 740], [941, 760], [940, 765], [1426, 758], [1427, 760], [1425, 759]].forEach(p => square(p[0], p[1], '#e01010'));
const pts = stoch.flatMap(([x0, s]) => s.split(' ').map(q => {
  const [x, y] = q.split(',');
  return [x0 + x * .40816, 700 + y / 3];
}));
let wave = `M${pts[0].join(' ')}`;
for (let i = 1; i < pts.length; i++) {
  const [x1, y1] = pts[i - 1], [x2, y2] = pts[i], k = (x2 - x1) * .38;
  wave += `C${(x1 + k).toFixed(1)} ${y1.toFixed(1)} ${(x2 - k).toFixed(1)} ${y2.toFixed(1)} ${x2.toFixed(1)} ${y2.toFixed(1)}`;
}
add(`<path d="${wave}" fill="none" stroke="#868686" stroke-width="2" stroke-linejoin="round"/>`);
square(363, 903, '#0808c0');
square(1648, 908, '#0808c0');

// time axis, the feed is closed for four minutes around midnight
for (let i = 0; i < 27; i++) {
  const min = 4 * 60 + 14 + i * 64 + (i > 18 ? 4 : 0);
  const hh = String(Math.floor(min / 60) % 24).padStart(2, '0'), mm = String(min % 60).padStart(2, '0');
  vline(5.5 + i * 64, 945, 949, '#8a949e');
  text(4 + i * 64, 957, i ? `${min >= 1440 ? 28 : 27} Jan ${hh}:${mm}` : '27 Jan 2016', '#8a949e', 't', i ? 53 : 50);
}

chart.innerHTML = out;
```
